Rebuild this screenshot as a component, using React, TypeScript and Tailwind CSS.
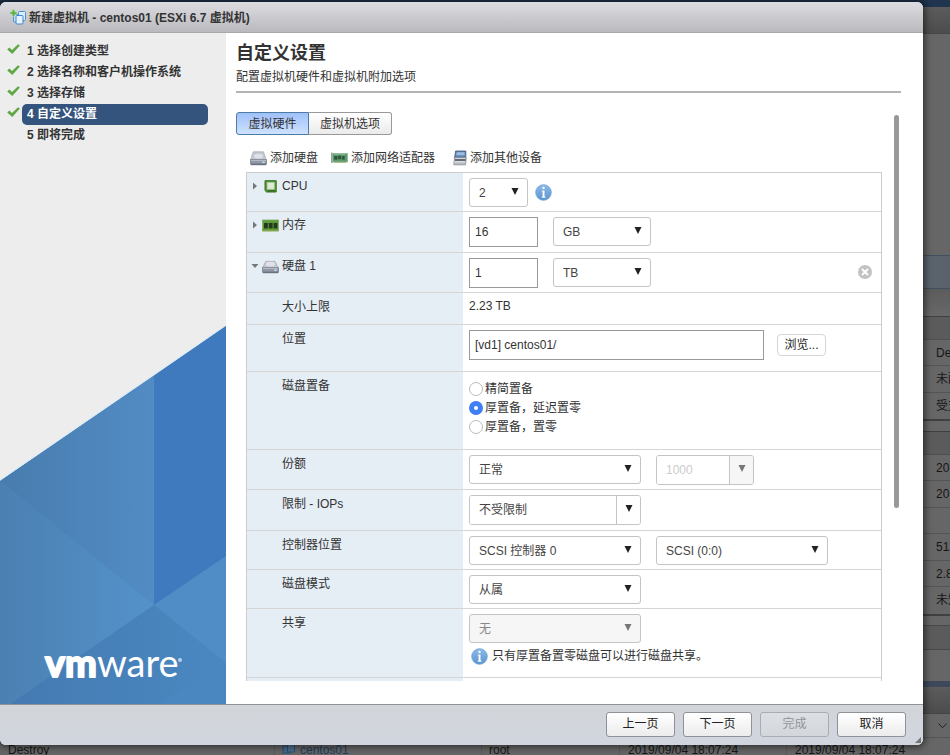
import { useState } from "react";
import type { ReactNode } from "react";

const steps = ["选择创建类型", "选择名称和客户机操作系统", "选择存储", "自定义设置", "即将完成"];
const currentStep = 3;

/* ---------- icons ---------- */

function CheckIcon() {
  return (
    <svg width="13" height="11" viewBox="0 0 13 11" aria-hidden="true">
      <path d="M0.2 5.4 2.4 3.5 5 5.9 11 0.3 12.9 1.6 5.3 10Z" fill="#5fa845" />
    </svg>
  );
}

function NewVmIcon() {
  return (
    <svg width="16" height="16" viewBox="0 0 16 16" aria-hidden="true">
      <rect x="3.5" y="5.5" width="7" height="7.5" rx="1" fill="#c9e2f8" stroke="#4a90d2" />
      <rect x="8.5" y="2.5" width="7" height="9" rx="1" fill="#dcebfa" stroke="#4a90d2" />
      <rect x="6" y="6.5" width="7" height="8.5" rx="1" fill="#e6f2fc" stroke="#3f88cc" />
      <path d="M2.2 0.5H4.8V2.7H7V5.3H4.8V7.5H2.2V5.3H0V2.7H2.2Z" fill="#63b34a" stroke="#e9f5e4" strokeWidth="0.4" />
    </svg>
  );
}

function DiskIcon({ add = false }: { add?: boolean }) {
  return (
    <svg width="17" height="15" viewBox="0 0 17 15" aria-hidden="true">
      <path d={add ? "M3.2 0.8H13.5L16.2 9H0.6Z" : "M3.8 2.4H13L16.2 8.6H0.6Z"} fill="#c3c7cf" stroke="#a3a7af" strokeWidth="0.7" />
      <ellipse cx="8.4" cy="5.2" rx="4.6" ry="2.4" fill="#dfe1e6" />
      <path d="M0.5 8.6H16.5V12.8Q16.5 13.8 15.5 13.8H1.5Q0.5 13.8 0.5 12.8Z" fill="#9299a6" stroke="#6d7483" strokeWidth="0.7" />
      <path d="M1 9.3H16" stroke="#c9cdd5" strokeWidth="0.8" />
      <path d="M1 13.2H16" stroke="#5b6272" />
      <rect x="12.4" y="10.6" width="2.2" height="1.3" fill="#d9ecff" />
    </svg>
  );
}

function NetworkIcon() {
  return (
    <svg width="17" height="12" viewBox="0 0 17 12" aria-hidden="true">
      <rect x="0" y="0.5" width="1.4" height="10.5" fill="#9a9fa0" />
      <rect x="1.5" y="1.5" width="15" height="8.5" fill="#5b9a6a" stroke="#8ab898" strokeWidth="0.8" />
      <rect x="3.2" y="4" width="3.2" height="3.6" fill="#2c5439" />
      <rect x="7.2" y="3.6" width="3" height="3.6" fill="#2c5439" />
      <rect x="11.2" y="4" width="2.4" height="3.6" fill="#2c5439" />
      <path d="M3 2.6H14" stroke="#89bd95" strokeWidth="0.8" />
      <path d="M3 10.4H15" stroke="#a9b583" />
    </svg>
  );
}

function DeviceIcon() {
  return (
    <svg width="14" height="16" viewBox="0 0 14 16" aria-hidden="true">
      <path d="M2.6 1H12.8V8.5H1.5Z" fill="#5d83b5" stroke="#3d5577" strokeWidth="0.8" />
      <path d="M3.8 2.2H11.6V5.2H3.2Z" fill="#9dbce0" />
      <path d="M1.5 7.6H13.2L12.6 14.8H0.8Z" fill="#d9dce1" stroke="#7b818b" strokeWidth="0.8" />
      <path d="M2 10H12.6" stroke="#3f444e" strokeWidth="1.6" />
      <path d="M2 13.2H12" stroke="#9ba0a8" strokeWidth="0.8" />
    </svg>
  );
}

function CpuIcon() {
  return (
    <svg width="17" height="13" viewBox="0 0 17 13" aria-hidden="true">
      <path d="M3 0.7H14.2V12H4.6L3 10.5Z" fill="#57983a" stroke="#35701f" />
      <rect x="5.2" y="2.6" width="7" height="6.6" fill="#dfe9d8" stroke="#b4cfa2" strokeWidth="0.8" />
      <path d="M5.5 10.8H13" stroke="#2c5c1a" />
    </svg>
  );
}

function MemoryIcon() {
  return (
    <svg width="17" height="13" viewBox="0 0 17 13" aria-hidden="true">
      <rect x="0.5" y="1" width="16" height="11" fill="#5d9b3a" stroke="#82ac63" strokeWidth="0.8" />
      <rect x="2" y="4" width="3.8" height="5.4" fill="#233a1c" />
      <rect x="6.8" y="4" width="3.8" height="5.4" fill="#233a1c" />
      <rect x="11.6" y="4" width="3.8" height="5.4" fill="#233a1c" />
      <path d="M1.5 11.8H15.5" stroke="#a9a94c" strokeDasharray="1.5 0.8" />
    </svg>
  );
}

function InfoIcon() {
  return (
    <svg className="shrink-0" width="17" height="17" viewBox="0 0 17 17" aria-hidden="true">
      <defs>
        <linearGradient id="infoFill" x1="0" y1="0" x2="0" y2="1">
          <stop offset="0" stopColor="#8dbbe8" />
          <stop offset="1" stopColor="#5b94d0" />
        </linearGradient>
      </defs>
      <circle cx="8.5" cy="8.5" r="7.8" fill="url(#infoFill)" stroke="#6a9fd6" strokeWidth="0.8" />
      <circle cx="8.5" cy="3.9" r="1.2" fill="#fff" />
      <path d="M7 6.4H9.5V12.6H10.4V13.8H6.8V12.6H7.6V7.6H7Z" fill="#fff" />
    </svg>
  );
}

function RemoveIcon() {
  return (
    <svg width="14" height="14" viewBox="0 0 14 14" aria-hidden="true">
      <circle cx="7" cy="7" r="7" fill="#c2c2c2" />
      <path d="M4 4 10 10M10 4 4 10" stroke="#fff" strokeWidth="2" />
    </svg>
  );
}

function DownArrow() {
  return (
    <svg width="8" height="7" viewBox="0 0 8 7" aria-hidden="true">
      <path d="M0.5 0H7.5L4 7Z" fill="currentColor" />
    </svg>
  );
}

function Twisty({ open }: { open: boolean }) {
  return (
    <svg width="8" height="8" viewBox="0 0 8 8" aria-hidden="true">
      <path d={open ? "M0.5 2H7.5L4 6Z" : "M2 0.5 6 4 2 7.5Z"} fill="#777" />
    </svg>
  );
}

/* ---------- form controls ---------- */

function Select({ label, options, width, disabled = false }: { label: string; options: string[]; width: string; disabled?: boolean }) {
  return (
    <div className={`relative ${width}`}>
      <select
        aria-label={label}
        disabled={disabled}
        className="block h-[29px] w-full appearance-none rounded-[3px] border border-[#c4c4c4] bg-white pr-6 pl-[9px] text-[12px] text-[#444] disabled:bg-[#f6f6f6] disabled:text-[#888] disabled:opacity-100"
      >
        {options.map((o) => (
          <option key={o}>{o}</option>
        ))}
      </select>
      <span className={`pointer-events-none absolute inset-y-0 right-[9px] flex items-center pb-[2px] ${disabled ? "text-[#777]" : "text-[#222]"}`}>
        <DownArrow />
      </span>
    </div>
  );
}

function TextField({ label, value, width }: { label: string; value: string; width: string }) {
  return (
    <input
      aria-label={label}
      defaultValue={value}
      className={`h-[30px] border border-[#999] bg-white px-[5px] text-[12px] text-[#333] ${width}`}
    />
  );
}

function Combo({ label, value, width, disabled = false }: { label: string; value: string; width: string; disabled?: boolean }) {
  return (
    <div className={`flex h-[30px] overflow-hidden rounded-[3px] border border-[#c4c4c4] ${width}`}>
      <input
        aria-label={label}
        defaultValue={value}
        disabled={disabled}
        className="min-w-0 flex-1 bg-white pl-[9px] text-[12px] text-[#444] disabled:text-[#ccc]"
      />
      <button
        type="button"
        aria-label={`${label} 选项`}
        disabled={disabled}
        className="flex w-6 items-center justify-center border-l border-[#c4c4c4] bg-white pb-1 text-[#222] disabled:bg-[#f6f6f6] disabled:text-[#777]"
      >
        <DownArrow />
      </button>
    </div>
  );
}

function Row({ label, icon, open, height, children }: { label: string; icon?: ReactNode; open?: boolean; height: string; children: ReactNode }) {
  return (
    <div className={`flex border-b border-[#d5d5d5] ${height}`}>
      <div className="flex h-full w-[216px] shrink-0 bg-[#e5edf5]">
        {icon ? (
          <button type="button" aria-expanded={open} className="flex h-[26px] items-center pl-1 text-[#333]">
            <Twisty open={!!open} />
            <span className="mr-[3px] ml-[3px]">{icon}</span>
            {label}
          </button>
        ) : (
          <span className="h-[28px] pl-[35px] leading-[28px]">{label}</span>
        )}
      </div>
      <div className="flex min-w-0 flex-1 items-start pt-[5px] pl-[6px]">{children}</div>
    </div>
  );
}

/* ---------- page behind the dialog ---------- */

const groups = [
  { rows: ["De", "未配", "受支"], gap: "mb-[10px]" },
  { rows: ["20", "20", "", "513", "2.8", "未知"], gap: "mb-[9px]" },
];

function Backdrop() {
  return (
    <div className="flex h-full flex-col overflow-hidden bg-[#666] text-[12px] text-[#161616]">
      <div className="h-[7px] shrink-0 bg-[#1f344e]" />
      <div className="h-[27px] shrink-0 border-b border-[#474747] bg-linear-to-b from-[#5c5c5c] to-[#4c4c4c]" />
      <div className="h-[221px] shrink-0" />
      <div className="h-[34px] shrink-0 border-y border-[#40505f] bg-[#5a636b]" />
      <div className="h-[27px] shrink-0 bg-linear-to-b from-[#5c5c5c] to-[#686868]" />
      {groups.map((g, i) => (
        <div key={i} className={`shrink-0 border-t border-b-2 border-[#404040] ${g.gap}`}>
          <div className="h-[23px] border-b border-[#505050] bg-[#5b5b5b]" />
          {g.rows.map((r, j) => (
            <div key={j} className="flex justify-end border-b border-[#555] last:border-b-0 odd:h-[27px] even:h-[26px]">
              <span className="w-[14px] overflow-hidden leading-[26px] whitespace-nowrap">{r}</span>
            </div>
          ))}
        </div>
      ))}
      <div className="h-[25px] shrink-0 border-y border-[#484848] bg-[#5b5b5b]" />
      <div className="h-[31px] shrink-0" />
      <div className="h-[6px] shrink-0 bg-[#3d495b]" />
      <div className="h-[27px] shrink-0 border-b border-[#444] bg-linear-to-b from-[#5c5c5c] to-[#4c4c4c]" />
      <div className="flex h-[24px] shrink-0 items-center justify-end border-b border-[#555] pr-[3px]">
        <svg width="9" height="6" viewBox="0 0 9 6" aria-hidden="true">
          <path d="M0.5 0.5 4.5 4.8 8.5 0.5" fill="none" stroke="#222" />
        </svg>
      </div>
      <div className="flex h-[24px] shrink-0 leading-[24px]">
        <span className="w-[275px] border-r border-[#5a5a5a] pl-2">Destroy</span>
        <span className="flex w-[207px] items-center gap-1 border-r border-[#5a5a5a] pl-[7px] text-[#1e3e5c]">
          <svg width="14" height="14" viewBox="0 0 14 14" aria-hidden="true">
            <rect x="1" y="3" width="7" height="7" fill="#4a6a88" stroke="#29506f" />
            <rect x="5.5" y="1" width="7" height="8" fill="#4f6f8c" stroke="#29506f" />
          </svg>
          centos01
        </span>
        <span className="w-[138px] border-r border-[#5a5a5a] pl-[7px]">root</span>
        <span className="w-[167px] border-r border-[#5a5a5a] pl-2">2019/09/04 18:07:24</span>
        <span className="flex-1 pl-2">2019/09/04 18:07:24</span>
      </div>
    </div>
  );
}

/* ---------- wizard sidebar ---------- */

function BrandArt() {
  return (
    <svg className="mt-auto block w-full shrink-0" viewBox="0 0 226 379" role="img" aria-label="vmware">
      <defs>
        <linearGradient id="artTop" x1="0" x2="1">
          <stop offset="0" stopColor="#487cae" />
          <stop offset="1" stopColor="#528cc4" />
        </linearGradient>
        <linearGradient id="artLeft" x1="0" x2="1">
          <stop offset="0" stopColor="#4b80b2" />
          <stop offset="1" stopColor="#5492ca" />
        </linearGradient>
        <linearGradient id="artBottom" x1="0" x2="1">
          <stop offset="0" stopColor="#457ab1" />
          <stop offset="1" stopColor="#4a88c1" />
        </linearGradient>
      </defs>
      <path d="M0 156 226 1V379H0Z" fill="#4a86c0" />
      <path d="M0 156 154 51V280Z" fill="url(#artTop)" />
      <path d="M0 156 154 280 10 379H0Z" fill="url(#artLeft)" />
      <path d="M154 51 226 1V231L154 280Z" fill="#3e7abd" />
      <path d="M154 280 226 231V338Z" fill="#508cc6" />
      <path d="M154 280 226 338 160 379H10Z" fill="url(#artBottom)" />
      <path d="M0 155 226 0" stroke="#d7ecf8" strokeWidth="1" />
      <g fill="#fff" fontFamily="Lato, sans-serif" fontSize="38">
        <text x="45" y="352" fontWeight="700" stroke="#fff" strokeWidth="2" strokeLinejoin="round">
          vm
        </text>
        <text x="97" y="352" fontWeight="400">
          ware
        </text>
      </g>
      <circle cx="180" cy="335" r="2" fill="#b5d3ee" />
    </svg>
  );
}

function Sidebar() {
  return (
    <nav aria-label="步骤" className="flex w-[226px] shrink-0 flex-col bg-[#ededed] pt-2">
      <ol className="font-bold">
        {steps.map((s, i) => (
          <li key={s} className="flex h-[21px] items-center">
            <span className="w-[22px] pb-1 pl-[7px]">{i <= currentStep && <CheckIcon />}</span>
            <a
              href="#"
              aria-current={i === currentStep ? "step" : undefined}
              className={`h-[21px] w-[186px] rounded-[5px] pl-[5px] leading-[21px] whitespace-nowrap ${i === currentStep ? "bg-[#34547e] text-white" : "text-[#333]"}`}
            >
              {i + 1} {s}
            </a>
          </li>
        ))}
      </ol>
      <BrandArt />
    </nav>
  );
}

/* ---------- main panel ---------- */

const provisioning = ["精简置备", "厚置备，延迟置零", "厚置备，置零"];

function Hardware() {
  const [mode, setMode] = useState(1);
  return (
    <div className="ml-[10px] min-h-0 flex-1 overflow-hidden border-x border-t border-[#ccc]">
      <Row label="CPU" icon={<CpuIcon />} height="h-[39px]">
        <Select label="CPU" options={["2", "4", "8"]} width="w-[59px]" />
        <button type="button" aria-label="CPU 信息" className="mt-[6px] ml-[7px]">
          <InfoIcon />
        </button>
      </Row>
      <Row label="内存" icon={<MemoryIcon />} height="h-[41px]">
        <TextField label="内存" value="16" width="w-[69px]" />
        <div className="w-[15px]" />
        <Select label="内存单位" options={["GB", "MB"]} width="w-[98px]" />
      </Row>
      <Row label="硬盘 1" icon={<DiskIcon />} open height="h-[40px]">
        <TextField label="硬盘 1" value="1" width="w-[69px]" />
        <div className="w-[15px]" />
        <Select label="硬盘单位" options={["TB", "GB", "MB"]} width="w-[98px]" />
        <button type="button" aria-label="移除硬盘 1" className="mt-[7px] mr-[9px] ml-auto">
          <RemoveIcon />
        </button>
      </Row>
      <Row label="大小上限" height="h-[32px]">
        <span className="leading-4">2.23 TB</span>
      </Row>
      <Row label="位置" height="h-[47px]">
        <TextField label="位置" value="[vd1] centos01/" width="w-[295px]" />
        <button type="button" className="mt-1 ml-[13px] h-[22px] w-[49px] rounded-[4px] border border-[#d5d5d5] bg-white text-[#222]">
          浏览...
        </button>
      </Row>
      <Row label="磁盘置备" height="h-[78px]">
        <div role="radiogroup" aria-label="磁盘置备" className="flex flex-col pt-[2px]">
          {provisioning.map((p, i) => (
            <label key={p} className="flex h-[19px] items-center gap-[2px]">
              <input
                type="radio"
                name="provisioning"
                checked={mode === i}
                onChange={() => setMode(i)}
                className="size-[14px] appearance-none rounded-full border border-[#bbb] bg-white checked:border-[5px] checked:border-[#3f7ff5]"
              />
              {p}
            </label>
          ))}
        </div>
      </Row>
      <Row label="份额" height="h-[40px]">
        <Select label="份额" options={["正常", "低", "高", "自定义"]} width="w-[172px]" />
        <div className="w-[15px]" />
        <Combo label="份额值" value="1000" width="w-[98px]" disabled />
      </Row>
      <Row label="限制 - IOPs" height="h-[41px]">
        <Combo label="限制 - IOPs" value="不受限制" width="w-[172px]" />
      </Row>
      <Row label="控制器位置" height="h-[39px]">
        <Select label="控制器" options={["SCSI 控制器 0"]} width="w-[172px]" />
        <div className="w-[15px]" />
        <Select label="控制器位置" options={["SCSI (0:0)", "SCSI (0:1)"]} width="w-[172px]" />
      </Row>
      <Row label="磁盘模式" height="h-[39px]">
        <Select label="磁盘模式" options={["从属", "独立 - 持久", "独立 - 非持久"]} width="w-[172px]" />
      </Row>
      <Row label="共享" height="h-[69px]">
        <div>
          <Select label="共享" options={["无"]} width="w-[172px]" disabled />
          <p className="mt-1 flex items-center gap-1 pl-[2px]">
            <InfoIcon />
            只有厚置备置零磁盘可以进行磁盘共享。
          </p>
        </div>
      </Row>
      <Row label="" height="h-[39px]">
        <span />
      </Row>
    </div>
  );
}

const footerButtons = [
  { text: "上一页", disabled: false },
  { text: "下一页", disabled: false },
  { text: "完成", disabled: true },
  { text: "取消", disabled: false },
];

export default function App() {
  return (
    <div className="relative h-screen overflow-hidden font-['Liberation_Sans','Noto_Sans_CJK_SC',sans-serif] text-[12px] text-[#333]">
      <Backdrop />
      <div
        role="dialog"
        aria-labelledby="dialog-title"
        className="absolute top-[2px] right-[27px] bottom-[10px] left-0 flex flex-col overflow-hidden rounded-[6px] bg-white shadow-[0_0_7px_2px_rgba(0,0,0,0.55)]"
      >
        <header className="flex h-[31px] shrink-0 items-center gap-[3px] border-b border-[#a9a9ad] bg-linear-to-b from-[#dcdce1] to-[#b9b9be] pl-[10px]">
          <NewVmIcon />
          <h1 id="dialog-title" className="pt-[2px] font-bold">
            新建虚拟机 - centos01 (ESXi 6.7 虚拟机)
          </h1>
        </header>

        <div className="flex min-h-0 flex-1">
          <Sidebar />
          <main className="flex min-w-0 flex-1 flex-col pr-[22px] pl-[10px]">
            <div className="border-b-2 border-[#b4b4b4] pt-2 pb-[2px]">
              <h2 className="text-[18px] leading-[24px] font-bold">自定义设置</h2>
              <p className="leading-[24px]">配置虚拟机硬件和虚拟机附加选项</p>
            </div>
            <div className="flex min-h-0 flex-1 pt-[19px] pb-[23px]">
              <div className="flex min-w-0 flex-1 flex-col">
                <div role="tablist" className="flex shrink-0">
                  <button
                    type="button"
                    role="tab"
                    aria-selected="true"
                    className="h-[23px] w-[73px] rounded-l-[3px] border border-[#4c7ba3] bg-linear-to-b from-[#9fc0fa] to-[#cfe2ff]"
                  >
                    虚拟硬件
                  </button>
                  <button
                    type="button"
                    role="tab"
                    aria-selected="false"
                    className="h-[23px] w-[83px] rounded-r-[3px] border border-l-0 border-[#999] bg-linear-to-b from-white to-[#ebebeb]"
                  >
                    虚拟机选项
                  </button>
                </div>
                <div className="flex h-[37px] shrink-0 items-center pt-[9px] pl-[14px]">
                  <button type="button" className="flex items-center gap-[3px]">
                    <DiskIcon add />
                    添加硬盘
                  </button>
                  <button type="button" className="ml-[13px] flex items-center gap-[3px]">
                    <NetworkIcon />
                    添加网络适配器
                  </button>
                  <button type="button" className="ml-[18px] flex items-center gap-[3px]">
                    <DeviceIcon />
                    添加其他设备
                  </button>
                </div>
                <Hardware />
              </div>
              <div className="mt-[3px] mr-[2px] ml-3 h-[69%] w-[5px] shrink-0 rounded-full bg-[#999]" />
            </div>
          </main>
        </div>

        <footer className="relative flex h-[41px] shrink-0 items-center justify-end gap-2 border-t border-[#8f9399] bg-linear-to-b from-[#d2d6da] to-[#d1d5de] pr-[17px] pb-[2px]">
          {footerButtons.map((b) => (
            <button
              key={b.text}
              type="button"
              disabled={b.disabled}
              className="h-[25px] w-[69px] rounded-[3px] border border-[#8e9196] bg-linear-to-b from-white to-[#ececec] text-[#222] disabled:border-[#a9adb3] disabled:from-[#dcdfe3] disabled:to-[#d3d6db] disabled:text-[#909499]"
            >
              {b.text}
            </button>
          ))}
          <svg className="absolute right-[2px] bottom-[2px]" width="6" height="6" viewBox="0 0 6 6" aria-hidden="true">
            <path d="M6 0V6H0Z" fill="#777" />
          </svg>
        </footer>
      </div>
    </div>
  );
}
